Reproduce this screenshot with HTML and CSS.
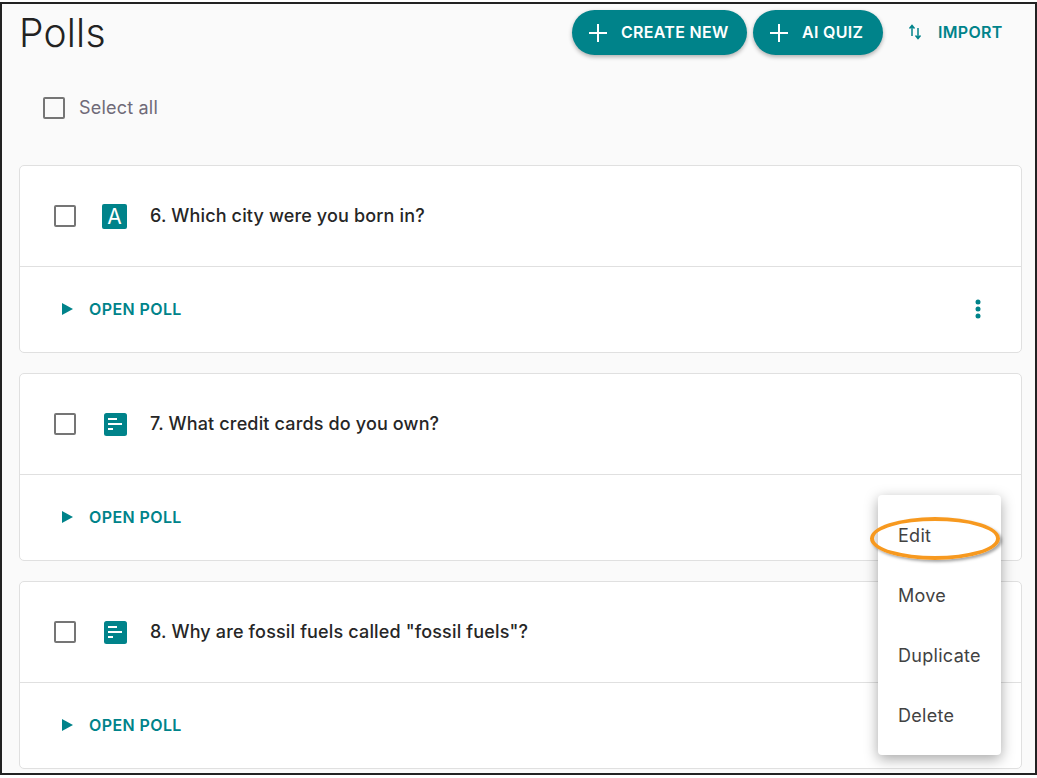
FILE: index.html
```html
<!DOCTYPE html>
<html lang="en">
<head>
<meta charset="utf-8">
<title>Polls</title>
<link rel="stylesheet" href="styles.css">
</head>
<body>
<div class="frame">
  <header class="top">
    <h1 class="title">Polls</h1>
    <div class="actions">
      <button class="pill pill-create"><svg class="plus" viewBox="0 0 18 18"><path d="M9 0v18M0 9h18"/></svg><span class="label">CREATE NEW</span></button>
      <button class="pill pill-ai"><svg class="plus" viewBox="0 0 18 18"><path d="M9 0v18M0 9h18"/></svg><span class="label">AI QUIZ</span></button>
      <button class="import"><svg class="swap" viewBox="0 0 14 16"><path d="M4 12V2M1.500 4.500 4 1.500l2.500 3M10 4v10.500M7.500 11.500l2.500 3 2.500-3"/></svg><span class="label">IMPORT</span></button>
    </div>
  </header>
  <label class="select-all"><span class="box"></span><span>Select all</span></label>
  <section class="card">
    <div class="q">
      <span class="box"></span>
      <svg class="qicon" viewBox="0 0 25 25"><rect width="25" height="25" rx="2" fill="#00838a"/><text x="12.500" y="20" text-anchor="middle" class="qletter">A</text></svg>
      <span class="qtext">6. Which city were you born in?</span>
    </div>
    <div class="foot">
      <svg class="play" viewBox="0 0 11 12"><path d="M0 0l11 6-11 6z"/></svg><span class="open">OPEN POLL</span>
      <svg class="dots" viewBox="0 0 6 20"><circle cx="3" cy="3" r="2.500"/><circle cx="3" cy="10" r="2.500"/><circle cx="3" cy="17" r="2.500"/></svg>
    </div>
  </section>
  <section class="card">
    <div class="q">
      <span class="box"></span>
      <svg class="qicon qicon-list" viewBox="0 0 23 23"><rect width="23" height="23" rx="2.500" fill="#00838a"/><path d="M4 6h9M4 11h14M4 16h5" stroke="#fff" stroke-width="2" fill="none"/></svg>
      <span class="qtext">7. What credit cards do you own?</span>
    </div>
    <div class="foot">
      <svg class="play" viewBox="0 0 11 12"><path d="M0 0l11 6-11 6z"/></svg><span class="open">OPEN POLL</span>
    </div>
  </section>
  <section class="card">
    <div class="q">
      <span class="box"></span>
      <svg class="qicon qicon-list" viewBox="0 0 23 23"><rect width="23" height="23" rx="2.500" fill="#00838a"/><path d="M4 6h9M4 11h14M4 16h5" stroke="#fff" stroke-width="2" fill="none"/></svg>
      <span class="qtext">8. Why are fossil fuels called "fossil fuels"?</span>
    </div>
    <div class="foot">
      <svg class="play" viewBox="0 0 11 12"><path d="M0 0l11 6-11 6z"/></svg><span class="open">OPEN POLL</span>
    </div>
  </section>
  <ul class="menu">
    <li>Edit</li>
    <li>Move</li>
    <li>Duplicate</li>
    <li>Delete</li>
  </ul>
  <div class="ring"></div>
</div>
</body>
</html>
```
FILE: styles.css
```css
* { box-sizing: border-box; }
html, body { margin: 0; padding: 0; background: #fff; }
body { font-family: "Inter", "Liberation Sans", sans-serif; color: #222; }
.frame {
  position: relative;
  margin-top: 2px;
  height: 773px;
  border: 2px solid #222;
  background: #fafafa;
  padding: 0 13px 0 17px;
  overflow: hidden;
}
.top { display: flex; justify-content: space-between; align-items: flex-start; height: 51px; padding-top: 6px; }
.title { margin: 1px 0 0; font-size: 39px; line-height: 44px; font-weight: 300; color: #222; letter-spacing: .2px; }
.actions { display: flex; align-items: center; gap: 6px; margin-right: 1px; }
.pill {
  display: flex; align-items: center; gap: 14px;
  height: 45px; border: 0; border-radius: 23px;
  background: #00838a; color: #fff;
  font: 600 16px/20px "Inter", sans-serif;
  letter-spacing: .3px;
  box-shadow: 0 2px 4px rgba(0,0,0,.3);
  padding: 0 0 0 17px;
  white-space: nowrap;
}
.label { margin-bottom: 2px; }
.pill-create { width: 175px; }
.pill-ai { width: 130px; }
.plus { width: 18px; height: 18px; stroke: #fff; stroke-width: 2; fill: none; flex: none; }
.import {
  display: flex; align-items: center; gap: 16px;
  height: 45px; width: 132px; border: 0; background: none;
  color: #00838a; font: 600 16px/20px "Inter", sans-serif; letter-spacing: .3px; padding: 0 0 0 19px;
}
.swap { width: 14px; height: 16px; stroke: #00838a; stroke-width: 1.500; fill: none; margin-top: -2px; flex: none; }
.select-all { display: flex; align-items: center; gap: 14px; margin: 31px 0 0 24px; height: 44px; font: 400 18px/24px "Inter", sans-serif; letter-spacing: .2px; color: #6f6a78; }
.box { width: 22px; height: 22px; flex: none; border: 2px solid #757575; border-radius: 2px; background: transparent; }
.card { height: 188px; background: #fff; border: 1px solid #e0e0e0; border-radius: 5px; margin-bottom: 20px; }
.select-all + .card { margin-top: 35px; }
.q { display: flex; align-items: center; height: 101px; border-bottom: 1px solid #e0e0e0; padding-left: 34px; }
.qicon { width: 25px; height: 25px; margin-left: 26px; flex: none; }
.qicon-list { width: 23px; height: 23px; margin-left: 28px; }
.qletter { font: 400 21px "Inter", sans-serif; fill: #fff; }
.qtext { margin-left: 23px; font: 500 18px/24px "Inter", sans-serif; letter-spacing: .15px; color: #262626; }
.foot { display: flex; align-items: center; height: 85px; padding: 0 40px 0 42px; }
.play { width: 11px; height: 12px; fill: #00838a; flex: none; margin-top: -2px; }
.open { margin: 0 0 2px 16px; font: 600 16px/20px "Inter", sans-serif; letter-spacing: .4px; color: #00838a; }
.dots { width: 6px; height: 20px; fill: #00838a; margin: 0 0 2px auto; }
.menu {
  position: absolute; left: 876px; top: 491px; width: 123px; height: 260px;
  list-style: none; margin: 0; padding: 11px 0 0;
  background: #fff; border-radius: 4px;
  box-shadow: 0 4px 14px rgba(0,0,0,.35);
  font: 400 18px/60px "Inter", sans-serif; letter-spacing: .3px; color: #424242;
}
.menu li { height: 60px; padding-left: 20px; }
.ring {
  position: absolute; left: 868px; top: 513px; width: 130px; height: 43px;
  border: 4px solid #f7991f; border-radius: 50%;
  box-shadow: 2px 2px 3px rgba(0,0,0,.35);
}
```
